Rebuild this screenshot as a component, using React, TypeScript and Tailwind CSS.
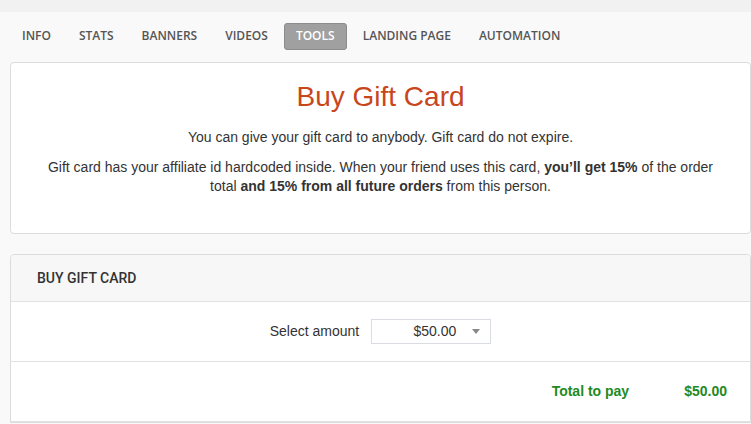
const tabs = ["INFO", "STATS", "BANNERS", "VIDEOS", "TOOLS", "LANDING PAGE", "AUTOMATION"];

export default function App() {
  return (
    <div className="min-h-[424px] w-[751px] overflow-hidden bg-[#f9f9f9] font-['Liberation_Sans',Arial,sans-serif] text-[14px] text-[#333]">
      <div className="h-[12px] bg-[#f1f1f1]" />
      <nav className="flex h-[50px] items-center gap-[4px] pb-[2px] pl-[10px] font-['Open_Sans',sans-serif] text-[12px] font-semibold text-[#555]">
        {tabs.map((t) =>
          t === "TOOLS" ? (
            <span
              key={t}
              className="flex h-[27px] items-center rounded-[3px] border border-[#8c8c8c] bg-[#a0a0a0] px-[11px] text-white"
            >
              {t}
            </span>
          ) : (
            <span key={t} className="px-3">
              {t}
            </span>
          )
        )}
      </nav>

      <section className="ml-[10px] h-[172px] rounded-[4px] border border-[#dcdcdc] bg-white px-[30px] pt-[18px] text-center">
        <h1 className="text-[28px] leading-[32px] text-[#c8461c]">Buy Gift Card</h1>
        <p className="mt-[14px] leading-[20px]">You can give your gift card to anybody. Gift card do not expire.</p>
        <p className="mt-[11px] leading-[19px]">
          Gift card has your affiliate id hardcoded inside. When your friend uses this card,{" "}
          <strong>you’ll get 15%</strong> of the order total <strong>and 15% from all future orders</strong> from this
          person.
        </p>
      </section>

      <section className="ml-[10px] mt-[20px] rounded-t-[4px] border border-[#dcdcdc] bg-white">
        <div className="flex h-[47px] items-center rounded-t-[4px] border-b border-[#e2e2e2] bg-[#f7f7f7] px-[26px] font-['Roboto',sans-serif] font-medium">
          BUY GIFT CARD
        </div>
        <div className="flex h-[60px] items-center justify-center gap-3 border-b border-[#e2e2e2]">
          <span>Select amount</span>
          <div className="flex h-[25px] w-[120px] items-center border border-[#d9dde3] bg-white">
            <span className="flex-1 pr-[16px] text-right">$50.00</span>
            <svg width="8" height="5" viewBox="0 0 8 5" className="mr-[10px]">
              <path d="M0 0h8L4 5z" fill="#888" />
            </svg>
          </div>
        </div>
        <div className="flex h-[60px] items-center justify-end border-b border-[#e2e2e2] pr-[23px] font-bold text-[#238a23]">
          <span>Total to pay</span>
          <span className="ml-[55px]">$50.00</span>
        </div>
      </section>
    </div>
  );
}
